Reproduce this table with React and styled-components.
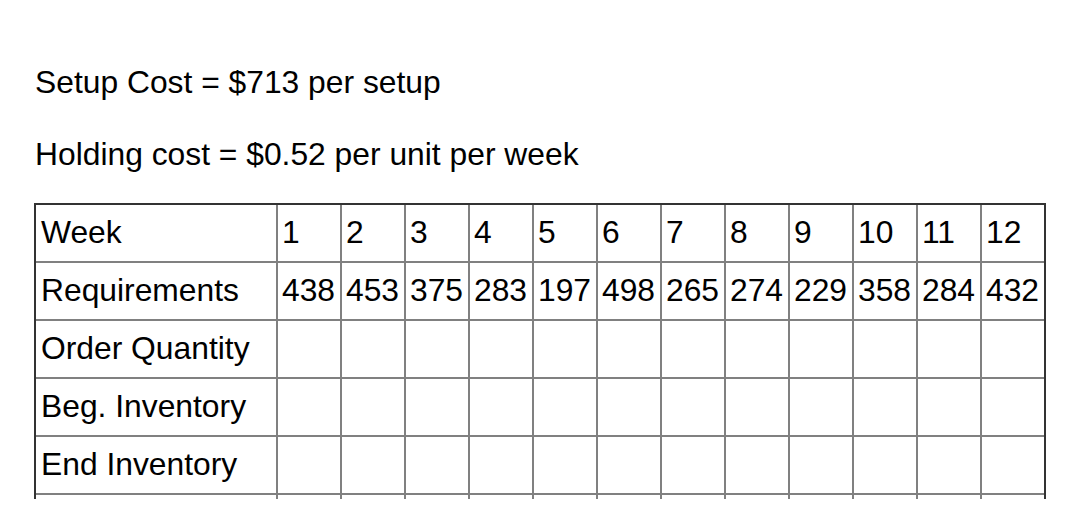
import React from 'react';
import styled, {createGlobalStyle} from 'styled-components';

const GlobalStyle = createGlobalStyle`
  body {
    margin: 0;
    background: #fff;
    font-family: "Liberation Sans", Arial, sans-serif;
    color: #000;
  }
`;

const weeks = [1, 2, 3, 4, 5, 6, 7, 8, 9, 10, 11, 12];
const requirements = [438, 453, 375, 283, 197, 498, 265, 274, 229, 358, 284, 432];
const emptyRows = ['Order Quantity', 'Beg. Inventory', 'End Inventory', ''];

const Page = styled.div`
  height: 499px;
  overflow: hidden;
  padding: 62px 0 0 34px;
  box-sizing: border-box;
`;

const Line = styled.p`
  margin: 0 0 0 1px;
  font-size: 31.8px;
  line-height: 40px;
  white-space: nowrap;

  & + & {
    margin-top: 32px;
  }
`;

const Grid = styled.div`
  margin-top: 29px;
  display: grid;
  grid-template-columns: 242px repeat(11, 64px) 62px;
  grid-auto-rows: 58px;
  width: max-content;
  border: 2px solid #333;
  border-bottom: none;
`;

const Cell = styled.div`
  display: flex;
  align-items: center;
  padding: 0 0 2px ${p => (p.$label ? '5px' : '4px')};
  font-size: 31.8px;
  white-space: nowrap;
  overflow: hidden;
  border-bottom: 2px solid #808080;
  border-right: ${p => (p.$last ? 'none' : '2px solid #808080')};
`;

function Row({label, values}) {
  return (
    <>
      <Cell $label>{label}</Cell>
      {weeks.map((w, i) => (
        <Cell key={w} $last={i === weeks.length - 1}>
          {values ? values[i] : ''}
        </Cell>
      ))}
    </>
  );
}

export default function App() {
  return (
    <Page>
      <GlobalStyle />
      <Line>Setup Cost = $713 per setup</Line>
      <Line>Holding cost = $0.52 per unit per week</Line>
      <Grid>
        <Row label="Week" values={weeks} />
        <Row label="Requirements" values={requirements} />
        {emptyRows.map((r, i) => (
          <Row key={i} label={r} />
        ))}
      </Grid>
    </Page>
  );
}
